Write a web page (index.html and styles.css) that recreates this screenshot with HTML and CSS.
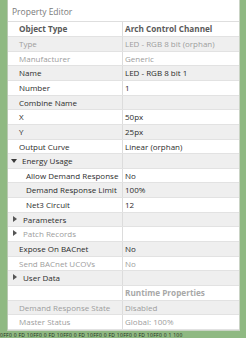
FILE: index.html
```html
<!DOCTYPE html>
<html lang="en">
<head>
    <meta charset="utf-8">
    <title>Property Editor</title>
    <link rel="stylesheet" href="styles.css">
</head>
<body>

    <div class="desk">
        <div class="panel">
            <div class="title">Property Editor</div>

            <div class="grid">
                <div class="row head">
                    <div class="cell">Object Type</div>
                    <div class="cell">Arch Control Channel</div>
                </div>
                <div class="row alt off">
                    <div class="cell">Type</div>
                    <div class="cell">LED - RGB 8 bit (orphan)</div>
                </div>
                <div class="row off">
                    <div class="cell">Manufacturer</div>
                    <div class="cell">Generic</div>
                </div>
                <div class="row alt">
                    <div class="cell">Name</div>
                    <div class="cell">LED - RGB 8 bit 1</div>
                </div>
                <div class="row">
                    <div class="cell">Number</div>
                    <div class="cell">1</div>
                </div>
                <div class="row alt">
                    <div class="cell">Combine Name</div>
                    <div class="cell"></div>
                </div>
                <div class="row">
                    <div class="cell">X</div>
                    <div class="cell">50px</div>
                </div>
                <div class="row alt">
                    <div class="cell">Y</div>
                    <div class="cell">25px</div>
                </div>
                <div class="row">
                    <div class="cell">Output Curve</div>
                    <div class="cell">Linear (orphan)</div>
                </div>
                <div class="row alt">
                    <div class="cell group"><span class="arrow down"></span>Energy Usage</div>
                    <div class="cell"></div>
                </div>
                <div class="row">
                    <div class="cell child">Allow Demand Response</div>
                    <div class="cell">No</div>
                </div>
                <div class="row alt">
                    <div class="cell child">Demand Response Limit</div>
                    <div class="cell">100%</div>
                </div>
                <div class="row">
                    <div class="cell child">Net3 Circuit</div>
                    <div class="cell">12</div>
                </div>
                <div class="row alt">
                    <div class="cell group"><span class="arrow right"></span>Parameters</div>
                    <div class="cell"></div>
                </div>
                <div class="row off">
                    <div class="cell group"><span class="arrow right"></span>Patch Records</div>
                    <div class="cell"></div>
                </div>
                <div class="row alt">
                    <div class="cell">Expose On BACnet</div>
                    <div class="cell">No</div>
                </div>
                <div class="row off">
                    <div class="cell">Send BACnet UCOVs</div>
                    <div class="cell">No</div>
                </div>
                <div class="row alt">
                    <div class="cell group"><span class="arrow right"></span>User Data</div>
                    <div class="cell"></div>
                </div>
                <div class="row head off">
                    <div class="cell"></div>
                    <div class="cell">Runtime Properties</div>
                </div>
                <div class="row alt off">
                    <div class="cell">Demand Response State</div>
                    <div class="cell">Disabled</div>
                </div>
                <div class="row off">
                    <div class="cell">Master Status</div>
                    <div class="cell">Global: 100%</div>
                </div>
            </div>
        </div>

        <div class="strip">0FF0 0 FD 10FF0 0 FD 10FF0 0 FD 10FF0 0 FD 10FF0 0 FD 10FF0 0 1 100</div>
    </div>

</body>
</html>
```

FILE: styles.css
```css
body {
    margin: 0;
    background-color: #8fb982;
    font-family: "Open Sans", "DejaVu Sans", sans-serif;
    font-size: 8px;
    overflow: hidden;
}

.desk {
    width: 246px;
    height: 338px;
    padding-left: 7px;
    box-sizing: border-box;
}

/* panel */
.panel {
    width: 233px;
    background-color: #ffffff;
    border-left: 1px solid #b9c9b2;
    border-right: 1px solid #c9d3c4;
    border-bottom: 1px solid #c9d3c4;
    box-sizing: border-box;
}

.title {
    height: 21.4px;
    line-height: 23px;
    padding-left: 4px;
    color: #7a7a7a;
    font-size: 8.5px;
}

.grid {
    border-top: 1px solid #dedede;
}

.row {
    display: grid;
    grid-template-columns: 114px 1fr;
    height: 14.65px;
    box-sizing: border-box;
    border-bottom: 1px solid #e2e2e2;
    color: #2c2c2c;
}

.row.alt {
    background-color: #efefef;
}

.cell {
    line-height: 14px;
    padding-left: 11px;
    white-space: nowrap;
    overflow: hidden;
}

.cell + .cell {
    padding-left: 2px;
    border-left: 1px solid #dcdcdc;
}

.cell.child {
    padding-left: 18px;
}

.cell.group {
    padding-left: 3px;
}

.row.off {
    color: #9d9d9d;
}

.head {
    font-weight: bold;
    color: #5a5a5a;
    font-size: 8.2px;
}

.head.off {
    color: #a8a8a8;
}

/* disclosure arrows */
.arrow {
    display: inline-block;
    width: 0;
    height: 0;
    margin-right: 5px;
    vertical-align: 1px;
}

.arrow.down {
    border-left: 3px solid transparent;
    border-right: 3px solid transparent;
    border-top: 4px solid #3a3a3a;
}

.arrow.right {
    border-top: 3px solid transparent;
    border-bottom: 3px solid transparent;
    border-left: 4px solid #555555;
    margin-left: 2px;
    margin-right: 6px;
}

.strip {
    margin-left: -7px;
    padding-top: 1px;
    font-size: 5px;
    color: #1e2a1a;
    white-space: nowrap;
    overflow: hidden;
    letter-spacing: 0.3px;
}
```
